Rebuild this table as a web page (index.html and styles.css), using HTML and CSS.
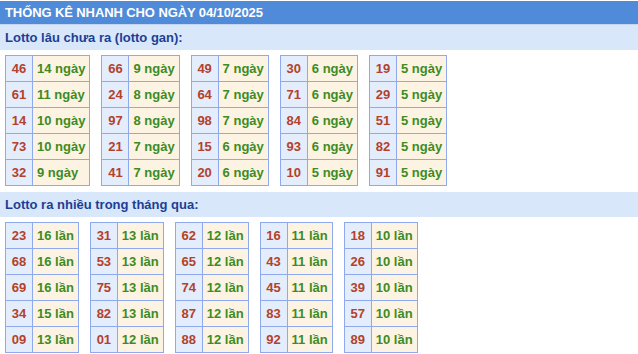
FILE: index.html
```html
<!DOCTYPE html>
<html lang="vi">
<head>
<meta charset="utf-8">
<link rel="stylesheet" href="styles.css">
</head>
<body>
<div class="box">
  <div class="title">THỐNG KÊ NHANH CHO NGÀY 04/10/2025</div>
  <div class="sub">Lotto lâu chưa ra (lotto gan):</div>
  <div class="tables">
    <table><tr><td class="n">46</td><td class="d">14 ngày</td></tr><tr><td class="n">61</td><td class="d">11 ngày</td></tr><tr><td class="n">14</td><td class="d">10 ngày</td></tr><tr><td class="n">73</td><td class="d">10 ngày</td></tr><tr><td class="n">32</td><td class="d">9 ngày</td></tr></table>
    <table><tr><td class="n">66</td><td class="d">9 ngày</td></tr><tr><td class="n">24</td><td class="d">8 ngày</td></tr><tr><td class="n">97</td><td class="d">8 ngày</td></tr><tr><td class="n">21</td><td class="d">7 ngày</td></tr><tr><td class="n">41</td><td class="d">7 ngày</td></tr></table>
    <table><tr><td class="n">49</td><td class="d">7 ngày</td></tr><tr><td class="n">64</td><td class="d">7 ngày</td></tr><tr><td class="n">98</td><td class="d">7 ngày</td></tr><tr><td class="n">15</td><td class="d">6 ngày</td></tr><tr><td class="n">20</td><td class="d">6 ngày</td></tr></table>
    <table><tr><td class="n">30</td><td class="d">6 ngày</td></tr><tr><td class="n">71</td><td class="d">6 ngày</td></tr><tr><td class="n">84</td><td class="d">6 ngày</td></tr><tr><td class="n">93</td><td class="d">6 ngày</td></tr><tr><td class="n">10</td><td class="d">5 ngày</td></tr></table>
    <table><tr><td class="n">19</td><td class="d">5 ngày</td></tr><tr><td class="n">29</td><td class="d">5 ngày</td></tr><tr><td class="n">51</td><td class="d">5 ngày</td></tr><tr><td class="n">82</td><td class="d">5 ngày</td></tr><tr><td class="n">91</td><td class="d">5 ngày</td></tr></table>
  </div>
  <div class="sub sub2">Lotto ra nhiều trong tháng qua:</div>
  <div class="tables">
    <table><tr><td class="n">23</td><td class="d">16 lần</td></tr><tr><td class="n">68</td><td class="d">16 lần</td></tr><tr><td class="n">69</td><td class="d">16 lần</td></tr><tr><td class="n">34</td><td class="d">15 lần</td></tr><tr><td class="n">09</td><td class="d">13 lần</td></tr></table>
    <table><tr><td class="n">31</td><td class="d">13 lần</td></tr><tr><td class="n">53</td><td class="d">13 lần</td></tr><tr><td class="n">75</td><td class="d">13 lần</td></tr><tr><td class="n">82</td><td class="d">13 lần</td></tr><tr><td class="n">01</td><td class="d">12 lần</td></tr></table>
    <table><tr><td class="n">62</td><td class="d">12 lần</td></tr><tr><td class="n">65</td><td class="d">12 lần</td></tr><tr><td class="n">74</td><td class="d">12 lần</td></tr><tr><td class="n">87</td><td class="d">12 lần</td></tr><tr><td class="n">88</td><td class="d">12 lần</td></tr></table>
    <table><tr><td class="n">16</td><td class="d">11 lần</td></tr><tr><td class="n">43</td><td class="d">11 lần</td></tr><tr><td class="n">45</td><td class="d">11 lần</td></tr><tr><td class="n">83</td><td class="d">11 lần</td></tr><tr><td class="n">92</td><td class="d">11 lần</td></tr></table>
    <table><tr><td class="n">18</td><td class="d">10 lần</td></tr><tr><td class="n">26</td><td class="d">10 lần</td></tr><tr><td class="n">39</td><td class="d">10 lần</td></tr><tr><td class="n">57</td><td class="d">10 lần</td></tr><tr><td class="n">89</td><td class="d">10 lần</td></tr></table>
  </div>
</div>
</body>
</html>
```

FILE: styles.css
```css
html, body {
  margin: 0;
  padding: 0;
  background: #ffffff;
}
body {
  padding-top: 1px;
  font-family: "Liberation Sans", Arial, sans-serif;
}
.box {
  width: 638px;
}
.title {
  height: 23px;
  line-height: 23px;
  background: #4f8bd8;
  border-bottom: 1px solid #c6d6ee;
  color: #ffffff;
  font-weight: bold;
  font-size: 13px;
  letter-spacing: -0.1px;
  padding-left: 5px;
}
.sub {
  height: 25px;
  line-height: 25px;
  background: #d9e7fa;
  color: #1c3f94;
  font-size: 13px;
  font-weight: bold;
  padding-left: 5px;
}
.sub2 {
  margin-top: 6px;
}
.tables {
  display: flex;
  gap: 11px;
  padding: 5px 5px 0;
  align-items: flex-start;
}
table {
  border-collapse: collapse;
}
td {
  border: 1px solid #8eaaec;
  padding: 0 4px;
  font-size: 13px;
  font-weight: bold;
  box-sizing: border-box;
  height: 26px;
  white-space: nowrap;
}
td.n {
  width: 27px;
  padding: 0;
  text-align: center;
  background: #e3edfc;
  color: #b3412b;
}
td.d {
  text-align: left;
  background: #fdf3e2;
  color: #3d8b24;
}
```
